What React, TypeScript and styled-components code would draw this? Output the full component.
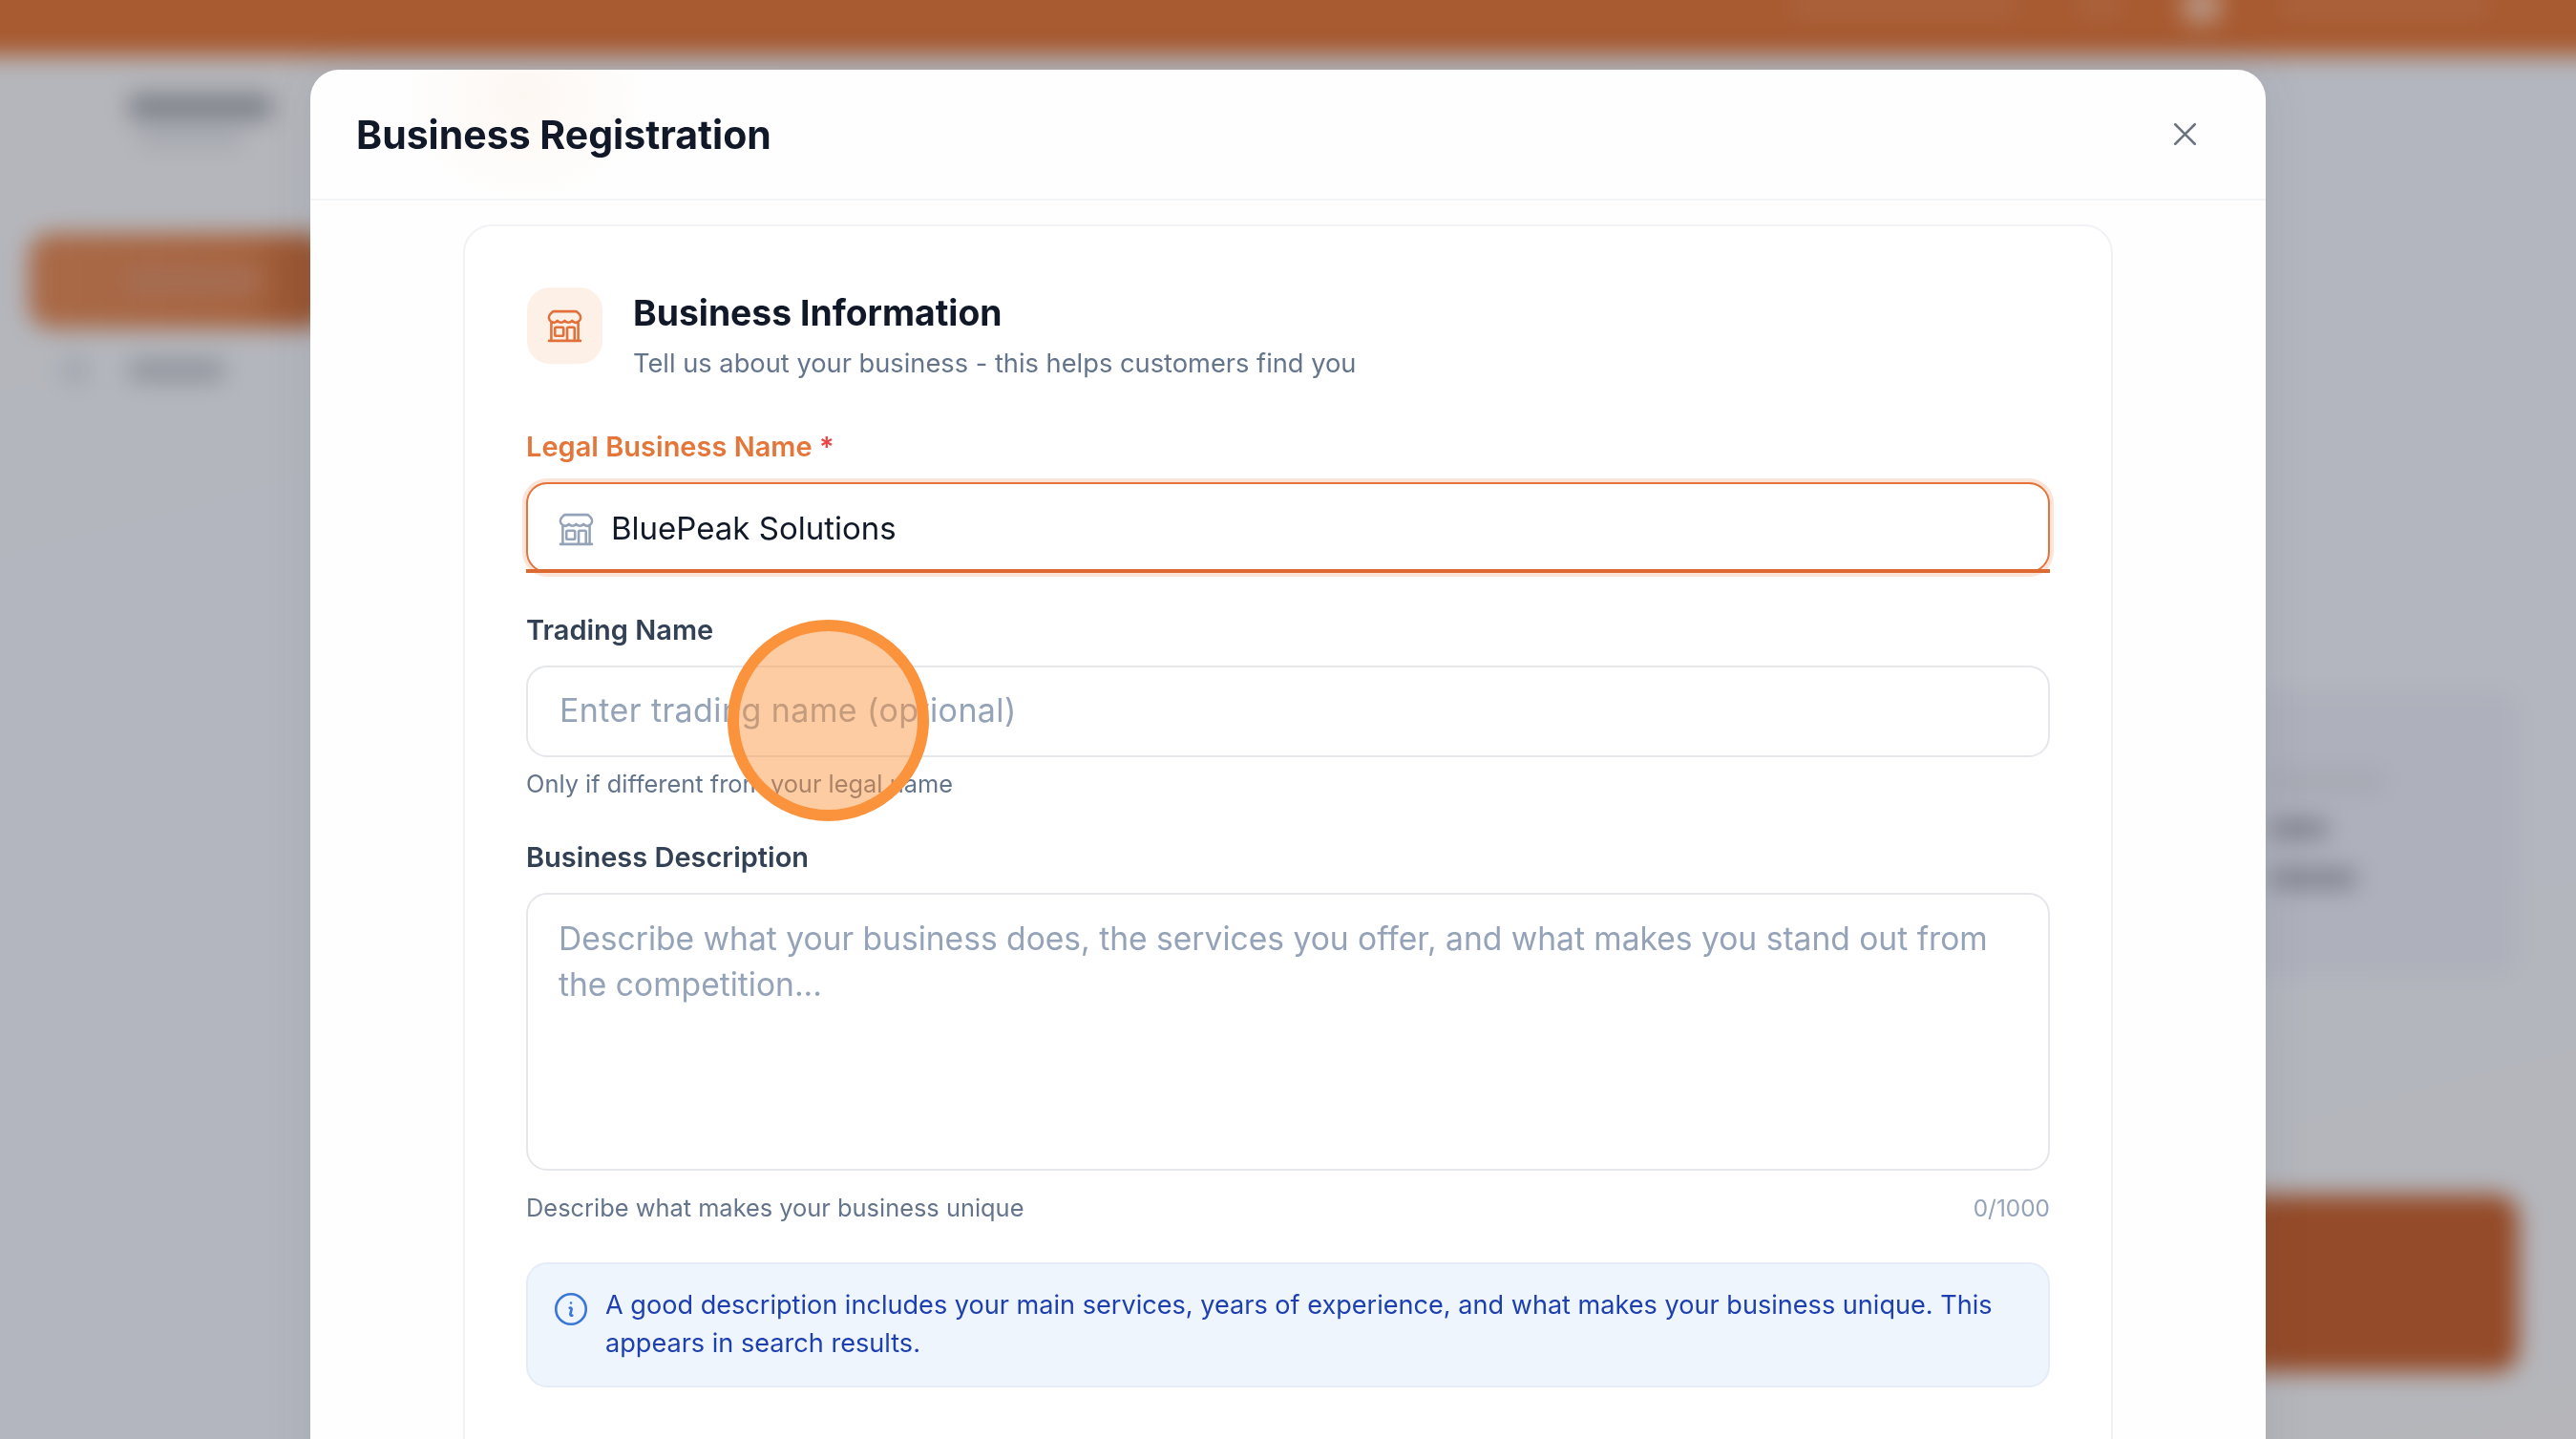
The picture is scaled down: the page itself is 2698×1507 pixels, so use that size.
import styled, { createGlobalStyle } from 'styled-components'
import {
	HiOutlineBuildingStorefront,
	HiOutlineInformationCircle,
	HiOutlineXMark
} from 'react-icons/hi2'

const GlobalStyle = createGlobalStyle`
	html, body {
		margin: 0;
		height: 100%;
		overflow: hidden;
		background: #b4b6bd;
	}
	* {
		box-sizing: border-box;
	}
`

const Heading = `'Inter', 'Liberation Sans', sans-serif`

// blurred page behind the dialog
const Backdrop = styled.div`
	position: fixed;
	inset: -40px;
	padding: 40px;
	display: flex;
	flex-direction: column;
	filter: blur(12px);
	background: linear-gradient(165deg, #b6b6ba 0%, #b3b6be 30%, #b3b6be 70%, #b6b6ba 100%);
`

const TopBar = styled.div`
	height: 58px;
	margin: -40px -40px 0;
	padding: 40px 130px 0 0;
	box-sizing: content-box;
	background: #a85a30;
	display: flex;
	align-items: flex-start;
	justify-content: flex-end;
	gap: 60px;
`

const TopBlob = styled.span<{ $w: number; $round?: boolean }>`
	width: ${({ $w }) => $w}px;
	height: ${({ $round }) => ($round ? '40px' : '14px')};
	margin-top: ${({ $round }) => ($round ? '-14px' : '0')};
	border-radius: 20px;
	background: rgba(190, 170, 160, ${({ $round }) => ($round ? 0.7 : 0.2)});
`

const PageBody = styled.div`
	flex: 1;
	display: flex;
`

const Sidebar = styled.div`
	width: 345px;
	padding: 40px 0 0 30px;
	display: flex;
	flex-direction: column;
`

const Brand = styled.div`
	width: 150px;
	height: 28px;
	margin-left: 105px;
	border-radius: 6px;
	background: #7f828b;
`

const BrandSub = styled.div`
	width: 110px;
	height: 16px;
	margin: 12px 0 0 115px;
	border-radius: 6px;
	background: #a3a6ae;
`

const ActiveNav = styled.div`
	height: 100px;
	margin-top: 90px;
	padding-left: 100px;
	display: flex;
	align-items: center;
	border-radius: 24px;
	background: linear-gradient(90deg, #a96a48 0%, #a7633e 70%, #94502c 100%);
`

const ActiveLabel = styled.span`
	width: 145px;
	height: 34px;
	border-radius: 8px;
	background: #a66d52;
`

const NavItem = styled.div`
	margin: 30px 0 0 35px;
	display: flex;
	align-items: center;
	gap: 42px;
`

const NavIcon = styled.span`
	width: 28px;
	height: 28px;
	border-radius: 6px;
	background: #a3a6af;
`

const NavText = styled.span`
	width: 100px;
	height: 22px;
	border-radius: 6px;
	background: #8f929b;
`

const Main = styled.div`
	flex: 1;
	padding: 665px 60px 0 0;
	display: flex;
	flex-direction: column;
	align-items: flex-end;
`

const SummaryCard = styled.div`
	width: 900px;
	height: 300px;
	padding: 85px 0 0 640px;
	border-radius: 24px;
	background: #aeb1bb;
`

const SummaryLine = styled.div<{ $w: number; $dark?: boolean }>`
	width: ${({ $w }) => $w}px;
	height: 20px;
	margin-bottom: ${({ $dark }) => ($dark ? '32px' : '30px')};
	border-radius: 6px;
	background: ${({ $dark }) => ($dark ? '#7f818b' : '#a5a8b1')};
`

const PayButton = styled.div`
	width: 900px;
	height: 186px;
	margin-top: 228px;
	border-radius: 24px;
	background: #944b29;
`

// dialog
const Overlay = styled.div`
	position: fixed;
	inset: 0;
	padding-top: 73px;
	overflow: hidden;
`

const Modal = styled.div`
	width: 2048px;
	height: 1600px;
	margin: 0 auto;
	border-radius: 30px;
	background: #fefefe;
	box-shadow: 0 0 50px rgba(60, 70, 90, 0.1);
`

const ModalHeader = styled.div`
	height: 137px;
	padding: 0 48px;
	display: flex;
	align-items: center;
	justify-content: space-between;
	border-bottom: 2px solid #f3f4f6;
	border-radius: 30px 30px 0 0;
	background: radial-gradient(ellipse 130px 110px at 225px 30px, #fdf7f2 0%, rgba(255, 255, 255, 0) 100%);
`

const ModalTitle = styled.h2`
	margin: 0;
	font-family: ${Heading};
	font-size: 41px;
	font-weight: 700;
	line-height: 48px;
	color: #111827;
`

const CloseButton = styled.button`
	width: 48px;
	height: 48px;
	margin-right: 13px;
	padding: 0;
	display: flex;
	align-items: center;
	justify-content: center;
	border: 0;
	background: none;
	color: #6b7280;
	font-size: 41px;
`

const ModalBody = styled.div`
	padding: 25px 160px 0;
`

const Card = styled.div`
	padding: 64px 64px 0;
	border: 2px solid #f1f2f5;
	border-radius: 30px;
	background: #fff;
	height: 1400px;
`

const CardHead = styled.div`
	display: flex;
	gap: 32px;
	padding-left: 1px;
`

const IconTile = styled.div`
	width: 79px;
	height: 80px;
	display: flex;
	align-items: center;
	justify-content: center;
	border-radius: 24px;
	background: #fdf1e7;
	color: #e2703a;
	font-size: 41px;
`

const HeadText = styled.div`
	padding-top: 3px;
`

const CardTitle = styled.h3`
	margin: 0;
	font-family: ${Heading};
	font-size: 37.3px;
	font-weight: 700;
	line-height: 48px;
	color: #111827;
`

const CardSub = styled.p`
	margin: 10px 0 0;
	font-family: 'Inter', sans-serif;
	font-size: 27.25px;
	line-height: 38px;
	color: #64748b;
`

const Field = styled.div`
	margin-top: 40px;
`

const FirstField = styled(Field)`
	margin-top: 48px;
`

const Label = styled.label<{ $active?: boolean }>`
	display: block;
	margin-bottom: 17px;
	font-family: ${Heading};
	font-size: 29px;
	font-weight: 600;
	line-height: 40px;
	color: ${({ $active }) => ($active ? '#e5763a' : '#334155')};
`

const Required = styled.span`
	color: #ef4444;
`

const InputFrame = styled.div<{ $focused?: boolean }>`
	position: relative;
	height: ${({ $focused }) => ($focused ? '95px' : '96px')};
	display: flex;
	align-items: center;
	gap: 16px;
	padding: ${({ $focused }) => ($focused ? '3px 30px 0' : '0 33px')};
	border: 2px solid ${({ $focused }) => ($focused ? '#e2743c' : '#e5e7eb')};
	border-radius: 22px;
	background: #fff;
	box-shadow: ${({ $focused }) => ($focused ? '0 0 0 4px rgba(234, 120, 60, 0.2)' : 'none')};
	&::after {
		content: "";
		display: ${({ $focused }) => ($focused ? 'block' : 'none')};
		position: absolute;
		left: -2px;
		right: -2px;
		bottom: -2px;
		height: 4px;
		background: #dd6a32;
	}
`

const FieldIcon = styled.span`
	display: flex;
	color: #94a3b8;
	font-size: 41px;
`

const Input = styled.input`
	flex: 1;
	min-width: 0;
	height: 100%;
	padding: 0 0 3px;
	border: 0;
	outline: 0;
	background: none;
	font-family: ${Heading};
	font-size: 33px;
	color: #111827;
	&::placeholder {
		font-size: 34px;
		letter-spacing: 0.4px;
		color: #94a3b8;
		opacity: 1;
	}
`

const TextArea = styled.textarea`
	display: block;
	width: 100%;
	height: 291px;
	padding: 22px 32px;
	resize: none;
	outline: 0;
	border: 2px solid #e5e7eb;
	border-radius: 22px;
	background: #fff;
	font-family: ${Heading};
	font-size: 33.6px;
	line-height: 48px;
	color: #111827;
	&::placeholder {
		color: #94a3b8;
		opacity: 1;
	}
`

const Helper = styled.div`
	margin-top: 11px;
	font-family: ${Heading};
	font-size: 25.4px;
	line-height: 34px;
	color: #64748b;
`

const HelperRow = styled.div`
	margin-top: 22px;
	display: flex;
	justify-content: space-between;
	font-family: ${Heading};
	font-size: 25.4px;
	line-height: 34px;
	color: #64748b;
`

const Counter = styled.span`
	font-size: 24.4px;
	color: #94a3b8;
`

const InfoBox = styled.div`
	margin-top: 40px;
	height: 131px;
	padding: 23px 40px 0 24px;
	display: flex;
	gap: 15px;
	border: 2px solid #e4ecf7;
	border-radius: 22px;
	background: #eef5fd;
`

const InfoIcon = styled.span`
	display: flex;
	margin-top: 3px;
	color: #3b76d9;
	font-size: 42px;
`

const InfoText = styled.p`
	margin: 0;
	font-family: 'Inter', sans-serif;
	font-size: 27.1px;
	line-height: 40px;
	color: #1e40af;
`

// pointer highlight from the screen recording
const CursorRing = styled.div`
	position: fixed;
	left: 762px;
	top: 649px;
	width: 211px;
	height: 211px;
	border: 12px solid #fb923c;
	border-radius: 50%;
	background: rgba(251, 146, 60, 0.47);
`

export default function App() {
	return (
		<>
			<GlobalStyle />
			<Backdrop>
				<TopBar>
					<TopBlob $w={240} />
					<TopBlob $w={50} />
					<TopBlob $w={44} $round />
					<TopBlob $w={220} />
				</TopBar>
				<PageBody>
					<Sidebar>
						<Brand />
						<BrandSub />
						<ActiveNav>
							<ActiveLabel />
						</ActiveNav>
						<NavItem>
							<NavIcon />
							<NavText />
						</NavItem>
					</Sidebar>
					<Main>
						<SummaryCard>
							<SummaryLine $w={120} />
							<SummaryLine $w={60} $dark />
							<SummaryLine $w={90} $dark />
						</SummaryCard>
						<PayButton />
					</Main>
				</PageBody>
			</Backdrop>
			<Overlay>
				<Modal>
					<ModalHeader>
						<ModalTitle>Business Registration</ModalTitle>
						<CloseButton aria-label="Close">
							<HiOutlineXMark />
						</CloseButton>
					</ModalHeader>
					<ModalBody>
						<Card>
							<CardHead>
								<IconTile>
									<HiOutlineBuildingStorefront />
								</IconTile>
								<HeadText>
									<CardTitle>Business Information</CardTitle>
									<CardSub>Tell us about your business - this helps customers find you</CardSub>
								</HeadText>
							</CardHead>
							<FirstField>
								<Label $active>Legal Business Name <Required>*</Required></Label>
								<InputFrame $focused>
									<FieldIcon>
										<HiOutlineBuildingStorefront />
									</FieldIcon>
									<Input readOnly value="BluePeak Solutions" />
								</InputFrame>
							</FirstField>
							<Field>
								<Label>Trading Name</Label>
								<InputFrame>
									<Input readOnly placeholder="Enter trading name (optional)" />
								</InputFrame>
								<Helper>Only if different from your legal name</Helper>
							</Field>
							<Field>
								<Label>Business Description</Label>
								<TextArea
									readOnly
									placeholder="Describe what your business does, the services you offer, and what makes you stand out from the competition..."
								/>
								<HelperRow>
									<span>Describe what makes your business unique</span>
									<Counter>0/1000</Counter>
								</HelperRow>
							</Field>
							<InfoBox>
								<InfoIcon>
									<HiOutlineInformationCircle />
								</InfoIcon>
								<InfoText>
									A good description includes your main services, years of experience, and what makes your business unique. This appears in search results.
								</InfoText>
							</InfoBox>
						</Card>
					</ModalBody>
				</Modal>
			</Overlay>
			<CursorRing />
		</>
	)
}
